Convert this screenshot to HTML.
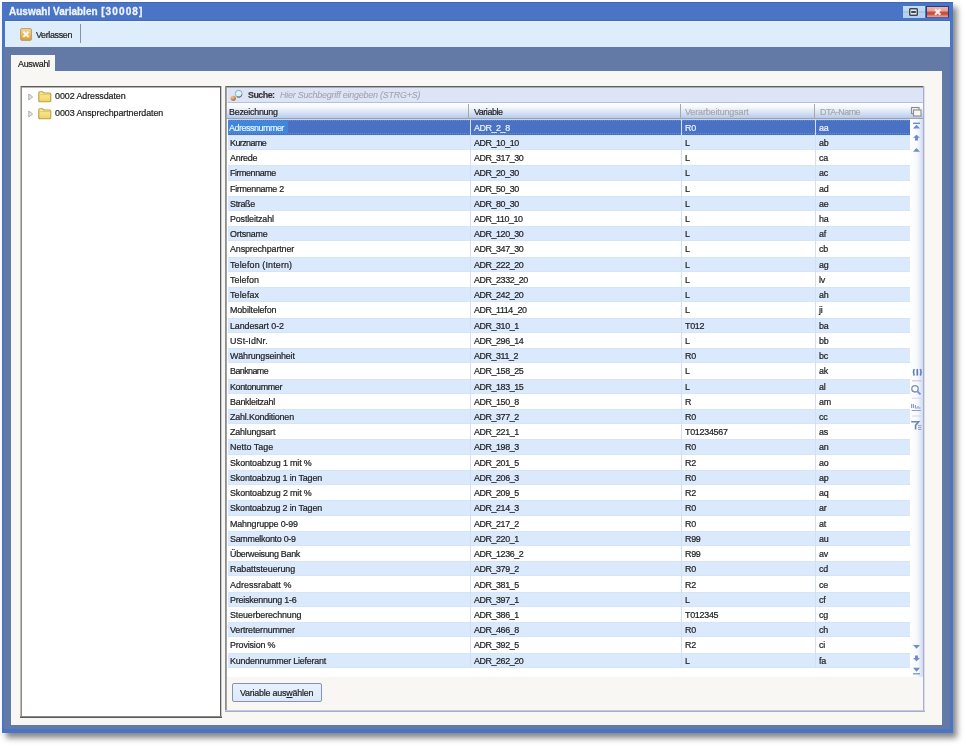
<!DOCTYPE html>
<html><head><meta charset="utf-8">
<style>
*{box-sizing:border-box;margin:0;padding:0}
html,body{width:967px;height:747px;overflow:hidden;background:#fff;font-family:"Liberation Sans",sans-serif}
#root{position:absolute;left:0;top:0;width:967px;height:747px;will-change:transform}
.abs{position:absolute}
#win{position:absolute;left:2px;top:2px;width:951px;height:731px;background:#4a74c6;box-shadow:4px 5px 6px rgba(0,0,0,.48)}
#title{position:absolute;left:9.2px;top:5.6px;transform-origin:0 0;transform:scaleX(0.965);letter-spacing:0px;font-weight:bold;font-size:10.4px;color:#eef3ff;white-space:nowrap;-webkit-text-stroke:0.3px #eef3ff;line-height:12px}
#toolbar{position:absolute;left:5px;top:21px;width:945px;height:26px;background:linear-gradient(#eaf4fe,#deedfc 2px)}
#slate{position:absolute;left:4px;top:47px;width:946px;height:682px;background:#6379a6}
#panel{position:absolute;left:11.3px;top:71.3px;width:931px;height:654px;background:#f8f7f3}
#tab{position:absolute;left:11px;top:55px;width:44px;height:17px;background:#f8f7f3}
.txt{position:absolute;transform-origin:0 0;transform:scaleX(0.93);white-space:nowrap;font-size:9.6px;color:#222;line-height:10px;-webkit-text-stroke:0.22px #222}
#tree{position:absolute;left:20.6px;top:86px;width:200.4px;height:631.4px;background:#fff;border:1.3px solid #4a4a4a;border-left-color:#8a8a8a;border-bottom-color:#505050}
.r{position:absolute;left:228.2px;width:681.8px;height:15.23px}
.r.alt{background:linear-gradient(#d3dff3,#dae9fc 1px,#dae9fc calc(100% - 1px),#d3dff3)}
.r.sel{background:#4a72c4}
.c{position:absolute;transform-origin:0 0;transform:scaleX(0.93);top:3.0px;font-size:9.6px;color:#222;white-space:nowrap;line-height:10px;-webkit-text-stroke:0.22px #222}
.sel .c{color:#eef4ff;-webkit-text-stroke:0.2px #eef4ff}
.c1{left:1.6px}.c2{left:245.5px;letter-spacing:-0.460px}.c3{left:457px}.c4{left:591px;letter-spacing:-0.35px}
.vl{position:absolute;width:1px;background:#d4e0f2}
.hl{position:absolute;width:1px;background:#a9a9a6}
.ht{position:absolute;transform-origin:0 0;transform:scaleX(0.93);white-space:nowrap;font-size:9.6px;color:#222;line-height:10px;-webkit-text-stroke:0.22px #222}
.ht.dis{color:#a6a6a6;-webkit-text-stroke:0.2px #a6a6a6}
</style></head><body><div id="root">
<div id="win"></div>
<div class="abs" style="left:2px;top:2px;width:951px;height:1px;background:#4266b4"></div>
<div class="abs" style="left:5px;top:20px;width:945px;height:1px;background:#426cb8"></div>
<div id="title">Auswahl Variablen <span style="letter-spacing:1.15px;margin-left:0.8px">[30008]</span></div>
<!-- title buttons -->
<div class="abs" style="left:903px;top:6px;width:22px;height:12px;background:linear-gradient(#c6e0fa,#b6d4f4 50%,#b0d0f2)"></div>
<div class="abs" style="left:903px;top:11px;width:22px;height:2px;background:#a9bec8;opacity:.6"></div>
<div class="abs" style="left:909px;top:8px;width:9px;height:8px;border:1px solid #3e4652;border-radius:1px;background:#e2e8ee;box-shadow:inset 0 0 0 0.5px #5a6270"></div>
<div class="abs" style="left:911px;top:11px;width:5px;height:2px;background:#3c4450;border-radius:1px"></div>
<div class="abs" style="left:926px;top:6px;width:23px;height:12px;border:1px solid #2c3a7c;border-bottom-color:#5a5a9a;background:linear-gradient(#ecb8b0,#e6a49a 35%,#cf503a 55%,#c84a34 70%,#e09080 90%,#e6a898)"></div>
<svg class="abs" style="left:926px;top:6px" width="23" height="12" viewBox="0 0 23 12"><path d="M9 3.2 L14.4 8.8 M14.4 3.2 L9 8.8" stroke="#f6eeee" stroke-width="2.1"/></svg>

<div id="toolbar"></div>
<!-- exit icon -->
<div class="abs" style="left:20px;top:28px;width:12px;height:12.5px;border-radius:2px;background:linear-gradient(#f0d49e,#e6bc70 45%,#d69c42);border:1px solid #c9a262"></div>
<svg class="abs" style="left:20px;top:28px" width="12" height="12" viewBox="0 0 12 12"><path d="M3.3 3.8 L8.7 9 M8.7 3.8 L3.3 9" stroke="#fff6e6" stroke-width="2"/></svg>
<div class="txt" style="left:35.8px;top:30.2px;letter-spacing:-0.371px">Verlassen</div>
<div class="abs" style="left:80px;top:24px;width:1px;height:19px;background:#8d92a0"></div>

<div id="slate"></div>
<div id="tab"></div>
<div class="txt" style="left:18px;top:58.6px;letter-spacing:-0.301px">Auswahl</div>
<div id="panel"></div>

<div class="abs" style="left:20px;top:86px;width:202px;height:632px;background:#fff"></div>
<div class="abs" style="left:20px;top:86px;width:202px;height:1px;background:#5c5c5c"></div>
<div class="abs" style="left:20px;top:87px;width:202px;height:1px;background:#b4b4b4"></div>
<div class="abs" style="left:20px;top:86px;width:1px;height:632px;background:#b8b8b8"></div>
<div class="abs" style="left:21px;top:87px;width:1px;height:631px;background:#8c8c8c"></div>
<div class="abs" style="left:220px;top:86px;width:1px;height:632px;background:#5c5c5c"></div>
<div class="abs" style="left:221px;top:86px;width:1px;height:632px;background:#c8c8c8"></div>
<div class="abs" style="left:20px;top:716px;width:202px;height:1px;background:#8a8a8a"></div>
<div class="abs" style="left:20px;top:717px;width:202px;height:1px;background:#5a5a5a"></div>
<svg class="abs" style="left:27px;top:92px" width="8" height="10" viewBox="0 0 8 10"><path d="M1.8 2 L5.6 5 L1.8 8 Z" fill="#e4e4e4" stroke="#b0b0b0" stroke-width="1"/></svg>
<svg class="abs" style="left:37.5px;top:90.6px" width="14" height="12" viewBox="0 0 14 12"><defs><linearGradient id="fg" x1="0" y1="0" x2="0" y2="1"><stop offset="0" stop-color="#fff0a0"/><stop offset="1" stop-color="#f0d060"/></linearGradient></defs><path d="M0.8 2 Q0.8 0.8 2 0.8 L4.6 0.8 L5.8 2 L11.5 2 Q12.8 2 12.8 3.2 L12.8 9.6 Q12.8 10.8 11.6 10.8 L2 10.8 Q0.8 10.8 0.8 9.6 Z" fill="url(#fg)" stroke="#b8a044" stroke-width="1.1"/><path d="M1.4 3.6 L12.2 3.6" stroke="#d8c060" stroke-width="0.8"/></svg>
<div class="txt" style="left:55.2px;top:91.3px;letter-spacing:-0.087px">0002 Adressdaten</div>
<svg class="abs" style="left:27px;top:109px" width="8" height="10" viewBox="0 0 8 10"><path d="M1.8 2 L5.6 5 L1.8 8 Z" fill="#e4e4e4" stroke="#b0b0b0" stroke-width="1"/></svg>
<svg class="abs" style="left:37.5px;top:107.6px" width="14" height="12" viewBox="0 0 14 12"><path d="M0.8 2 Q0.8 0.8 2 0.8 L4.6 0.8 L5.8 2 L11.5 2 Q12.8 2 12.8 3.2 L12.8 9.6 Q12.8 10.8 11.6 10.8 L2 10.8 Q0.8 10.8 0.8 9.6 Z" fill="url(#fg)" stroke="#b8a044" stroke-width="1.1"/><path d="M1.4 3.6 L12.2 3.6" stroke="#d8c060" stroke-width="0.8"/></svg>
<div class="txt" style="left:55.2px;top:108.3px;letter-spacing:-0.082px">0003 Ansprechpartnerdaten</div>

<!-- grid box -->
<div class="abs" style="left:225px;top:86px;width:700px;height:626px;background:#f8f7f3"></div>
<div class="abs" style="left:227px;top:88px;width:696px;height:589px;background:#fff"></div>
<div class="abs" style="left:225px;top:86px;width:700px;height:1px;background:#5e6266"></div>
<div class="abs" style="left:225px;top:87px;width:699px;height:1px;background:#a8adb8"></div>
<div class="abs" style="left:225px;top:86px;width:1px;height:626px;background:#8e8e8e"></div>
<div class="abs" style="left:226px;top:87px;width:1px;height:624px;background:#a2a2a2"></div>
<div class="abs" style="left:923px;top:86px;width:1px;height:626px;background:#a8aed0"></div>
<div class="abs" style="left:924px;top:86px;width:1px;height:626px;background:#dcdde8"></div>
<div class="abs" style="left:225px;top:710px;width:700px;height:1px;background:#c4c8de"></div>
<div class="abs" style="left:225px;top:711px;width:700px;height:1px;background:#a8acca"></div>
<!-- search bar -->
<div class="abs" style="left:227px;top:88px;width:696px;height:15px;background:#dde4f5;border-bottom:1px solid #b4c0dc;border-left:1px solid #eaeef8"></div>
<svg class="abs" style="left:228px;top:88px" width="16" height="14" viewBox="0 0 16 14"><defs><radialGradient id="hg" cx="0.35" cy="0.3" r="0.8"><stop offset="0" stop-color="#f4c890"/><stop offset="1" stop-color="#a8683a"/></radialGradient></defs><circle cx="10.7" cy="5.7" r="3.4" fill="#d6f6f8" stroke="#9aa8b0" stroke-width="1"/><path d="M8.8 8.6 A3.4 3.4 0 0 0 13.9 6.6" fill="none" stroke="#6a7480" stroke-width="1.1"/><circle cx="5.3" cy="10.3" r="2.6" fill="url(#hg)"/></svg>
<div class="txt" style="left:247.7px;top:90.1px;font-weight:bold;color:#333;letter-spacing:-0.587px;-webkit-text-stroke:0.15px #333">Suche:</div>
<div class="txt" style="left:280px;top:90.1px;font-style:italic;color:#a4a4ac;letter-spacing:-0.234px;-webkit-text-stroke:0.1px #a4a4ac">Hier Suchbegriff eingeben (STRG+S)</div>
<!-- header -->
<div class="abs" style="left:227px;top:103px;width:696px;height:16px;background:linear-gradient(#fbfdff,#f6f8fd 25%,#dce5f5 60%,#b8cbec);border-bottom:1px solid #98a2b2"></div>
<div class="hl" style="left:468.4px;top:104px;height:14.5px"></div>
<div class="hl" style="left:679.8px;top:104px;height:14.5px"></div>
<div class="hl" style="left:814.3px;top:104px;height:14.5px"></div>
<div class="ht" style="left:229.4px;top:106.8px;letter-spacing:-0.285px">Bezeichnung</div>
<div class="ht" style="left:473.9px;top:106.8px;letter-spacing:-0.484px">Variable</div>
<div class="ht dis" style="left:685px;top:106.8px;letter-spacing:-0.124px">Verarbeitungsart</div>
<div class="ht dis" style="left:819.6px;top:106.8px;letter-spacing:-0.524px">DTA-Name</div>
<!-- column chooser -->
<svg class="abs" style="left:910px;top:106px" width="12" height="11" viewBox="0 0 12 11"><rect x="1.5" y="1.5" width="7.5" height="6" fill="#eeeeee" stroke="#8c8c8c" stroke-width="1.1"/><rect x="3.5" y="4" width="7.5" height="6" fill="#f6f6f6" stroke="#8c8c8c" stroke-width="1.1"/></svg>

<!-- rows -->
<div class="r sel" style="top:119.60px"><span class="c c1" style="letter-spacing:-0.503px"></span><span class="c c2">ADR_2_8</span><span class="c c3" style="letter-spacing:-0.298px">R0</span><span class="c c4">aa</span></div>
<div class="r alt" style="top:134.83px"><span class="c c1" style="letter-spacing:-0.602px">Kurzname</span><span class="c c2">ADR_10_10</span><span class="c c3" style="letter-spacing:-0.298px">L</span><span class="c c4">ab</span></div>
<div class="r" style="top:150.06px"><span class="c c1" style="letter-spacing:-0.286px">Anrede</span><span class="c c2">ADR_317_30</span><span class="c c3" style="letter-spacing:-0.298px">L</span><span class="c c4">ca</span></div>
<div class="r alt" style="top:165.29px"><span class="c c1" style="letter-spacing:-0.468px">Firmenname</span><span class="c c2">ADR_20_30</span><span class="c c3" style="letter-spacing:-0.298px">L</span><span class="c c4">ac</span></div>
<div class="r" style="top:180.52px"><span class="c c1" style="letter-spacing:-0.328px">Firmenname 2</span><span class="c c2">ADR_50_30</span><span class="c c3" style="letter-spacing:-0.298px">L</span><span class="c c4">ad</span></div>
<div class="r alt" style="top:195.75px"><span class="c c1" style="letter-spacing:-0.338px">Straße</span><span class="c c2">ADR_80_30</span><span class="c c3" style="letter-spacing:-0.298px">L</span><span class="c c4">ae</span></div>
<div class="r" style="top:210.98px"><span class="c c1" style="letter-spacing:-0.163px">Postleitzahl</span><span class="c c2">ADR_110_10</span><span class="c c3" style="letter-spacing:-0.298px">L</span><span class="c c4">ha</span></div>
<div class="r alt" style="top:226.21px"><span class="c c1" style="letter-spacing:-0.240px">Ortsname</span><span class="c c2">ADR_120_30</span><span class="c c3" style="letter-spacing:-0.298px">L</span><span class="c c4">af</span></div>
<div class="r" style="top:241.44px"><span class="c c1" style="letter-spacing:-0.133px">Ansprechpartner</span><span class="c c2">ADR_347_30</span><span class="c c3" style="letter-spacing:-0.298px">L</span><span class="c c4">cb</span></div>
<div class="r alt" style="top:256.67px"><span class="c c1" style="letter-spacing:0.149px">Telefon (Intern)</span><span class="c c2">ADR_222_20</span><span class="c c3" style="letter-spacing:-0.298px">L</span><span class="c c4">ag</span></div>
<div class="r" style="top:271.90px"><span class="c c1" style="letter-spacing:0.030px">Telefon</span><span class="c c2">ADR_2332_20</span><span class="c c3" style="letter-spacing:-0.298px">L</span><span class="c c4">lv</span></div>
<div class="r alt" style="top:287.13px"><span class="c c1" style="letter-spacing:0.143px">Telefax</span><span class="c c2">ADR_242_20</span><span class="c c3" style="letter-spacing:-0.298px">L</span><span class="c c4">ah</span></div>
<div class="r" style="top:302.36px"><span class="c c1" style="letter-spacing:-0.162px">Mobiltelefon</span><span class="c c2">ADR_1114_20</span><span class="c c3" style="letter-spacing:-0.298px">L</span><span class="c c4">ji</span></div>
<div class="r alt" style="top:317.59px"><span class="c c1" style="letter-spacing:-0.096px">Landesart 0-2</span><span class="c c2">ADR_310_1</span><span class="c c3" style="letter-spacing:-0.298px">T012</span><span class="c c4">ba</span></div>
<div class="r" style="top:332.82px"><span class="c c1" style="letter-spacing:0.125px">USt-IdNr.</span><span class="c c2">ADR_296_14</span><span class="c c3" style="letter-spacing:-0.298px">L</span><span class="c c4">bb</span></div>
<div class="r alt" style="top:348.05px"><span class="c c1" style="letter-spacing:-0.158px">Währungseinheit</span><span class="c c2">ADR_311_2</span><span class="c c3" style="letter-spacing:-0.298px">R0</span><span class="c c4">bc</span></div>
<div class="r" style="top:363.28px"><span class="c c1" style="letter-spacing:-0.611px">Bankname</span><span class="c c2">ADR_158_25</span><span class="c c3" style="letter-spacing:-0.298px">L</span><span class="c c4">ak</span></div>
<div class="r alt" style="top:378.51px"><span class="c c1" style="letter-spacing:-0.387px">Kontonummer</span><span class="c c2">ADR_183_15</span><span class="c c3" style="letter-spacing:-0.298px">L</span><span class="c c4">al</span></div>
<div class="r" style="top:393.74px"><span class="c c1" style="letter-spacing:-0.286px">Bankleitzahl</span><span class="c c2">ADR_150_8</span><span class="c c3" style="letter-spacing:-0.298px">R</span><span class="c c4">am</span></div>
<div class="r alt" style="top:408.97px"><span class="c c1" style="letter-spacing:-0.205px">Zahl.Konditionen</span><span class="c c2">ADR_377_2</span><span class="c c3" style="letter-spacing:-0.298px">R0</span><span class="c c4">cc</span></div>
<div class="r" style="top:424.20px"><span class="c c1" style="letter-spacing:-0.186px">Zahlungsart</span><span class="c c2">ADR_221_1</span><span class="c c3" style="letter-spacing:-0.298px">T01234567</span><span class="c c4">as</span></div>
<div class="r alt" style="top:439.43px"><span class="c c1" style="letter-spacing:0.014px">Netto Tage</span><span class="c c2">ADR_198_3</span><span class="c c3" style="letter-spacing:-0.298px">R0</span><span class="c c4">an</span></div>
<div class="r" style="top:454.66px"><span class="c c1" style="letter-spacing:-0.151px">Skontoabzug 1 mit %</span><span class="c c2">ADR_201_5</span><span class="c c3" style="letter-spacing:-0.298px">R2</span><span class="c c4">ao</span></div>
<div class="r alt" style="top:469.89px"><span class="c c1" style="letter-spacing:-0.174px">Skontoabzug 1 in Tagen</span><span class="c c2">ADR_206_3</span><span class="c c3" style="letter-spacing:-0.298px">R0</span><span class="c c4">ap</span></div>
<div class="r" style="top:485.12px"><span class="c c1" style="letter-spacing:-0.151px">Skontoabzug 2 mit %</span><span class="c c2">ADR_209_5</span><span class="c c3" style="letter-spacing:-0.298px">R2</span><span class="c c4">aq</span></div>
<div class="r alt" style="top:500.35px"><span class="c c1" style="letter-spacing:-0.174px">Skontoabzug 2 in Tagen</span><span class="c c2">ADR_214_3</span><span class="c c3" style="letter-spacing:-0.298px">R0</span><span class="c c4">ar</span></div>
<div class="r" style="top:515.58px"><span class="c c1" style="letter-spacing:-0.190px">Mahngruppe 0-99</span><span class="c c2">ADR_217_2</span><span class="c c3" style="letter-spacing:-0.298px">R0</span><span class="c c4">at</span></div>
<div class="r alt" style="top:530.81px"><span class="c c1" style="letter-spacing:-0.303px">Sammelkonto 0-9</span><span class="c c2">ADR_220_1</span><span class="c c3" style="letter-spacing:-0.298px">R99</span><span class="c c4">au</span></div>
<div class="r" style="top:546.04px"><span class="c c1" style="letter-spacing:-0.332px">Überweisung Bank</span><span class="c c2">ADR_1236_2</span><span class="c c3" style="letter-spacing:-0.298px">R99</span><span class="c c4">av</span></div>
<div class="r alt" style="top:561.27px"><span class="c c1" style="letter-spacing:-0.056px">Rabattsteuerung</span><span class="c c2">ADR_379_2</span><span class="c c3" style="letter-spacing:-0.298px">R0</span><span class="c c4">cd</span></div>
<div class="r" style="top:576.50px"><span class="c c1" style="letter-spacing:0.026px">Adressrabatt %</span><span class="c c2">ADR_381_5</span><span class="c c3" style="letter-spacing:-0.298px">R2</span><span class="c c4">ce</span></div>
<div class="r alt" style="top:591.73px"><span class="c c1" style="letter-spacing:-0.226px">Preiskennung 1-6</span><span class="c c2">ADR_397_1</span><span class="c c3" style="letter-spacing:-0.298px">L</span><span class="c c4">cf</span></div>
<div class="r" style="top:606.96px"><span class="c c1" style="letter-spacing:-0.141px">Steuerberechnung</span><span class="c c2">ADR_386_1</span><span class="c c3" style="letter-spacing:-0.298px">T012345</span><span class="c c4">cg</span></div>
<div class="r alt" style="top:622.19px"><span class="c c1" style="letter-spacing:-0.158px">Vertreternummer</span><span class="c c2">ADR_466_8</span><span class="c c3" style="letter-spacing:-0.298px">R0</span><span class="c c4">ch</span></div>
<div class="r" style="top:637.42px"><span class="c c1" style="letter-spacing:-0.175px">Provision %</span><span class="c c2">ADR_392_5</span><span class="c c3" style="letter-spacing:-0.298px">R2</span><span class="c c4">ci</span></div>
<div class="r alt" style="top:652.65px"><span class="c c1" style="letter-spacing:-0.227px">Kundennummer Lieferant</span><span class="c c2">ADR_262_20</span><span class="c c3" style="letter-spacing:-0.298px">L</span><span class="c c4">fa</span></div>
<!-- selection highlight + focus -->
<div class="abs" style="left:228px;top:119px;width:682px;height:1px;background:#c4d4f0"></div>
<div class="abs" style="left:228.4px;top:120.8px;width:59.6px;height:12.2px;background:#3f86de"></div>
<div class="abs" style="left:229.4px;top:122.6px;transform-origin:0 0;transform:scaleX(0.93);font-size:9.6px;letter-spacing:-0.503px;line-height:10px;white-space:nowrap;color:#e8f4ff;-webkit-text-stroke:0.2px #e8f4ff">Adressnummer</div>
<div class="abs" style="left:228.2px;top:119.8px;width:681.8px;height:1px;background-image:linear-gradient(90deg,#e8f0ff 50%,transparent 50%);background-size:2px 1px;opacity:.2"></div>
<div class="abs" style="left:228.2px;top:133.2px;width:681.8px;height:1px;background-image:linear-gradient(90deg,#e8f0ff 50%,transparent 50%);background-size:2px 1px;opacity:.2"></div>
<!-- column lines in rows -->
<div class="vl" style="left:469.6px;top:119.6px;height:548.3px"></div>
<div class="vl" style="left:681px;top:119.6px;height:548.3px"></div>
<div class="vl" style="left:815.4px;top:119.6px;height:548.3px"></div>
<!-- right strip -->
<div class="abs" style="left:910px;top:119px;width:13px;height:558px;background:linear-gradient(90deg,#ffffff,#f6f9fe 55%,#d0dcf2)"></div>
<svg class="abs" style="left:910px;top:119px" width="13" height="560" viewBox="0 0 13 560">
<g fill="#6e8ccc">
<rect x="3" y="3.6" width="7" height="1.4"/><path d="M3 9.6 L6.5 5.8 L10 9.6 Z"/>
<path d="M6.5 15.8 L10 18.8 L8 18.8 L8 21.6 L5 21.6 L5 18.8 L3 18.8 Z"/>
<path d="M3 32.8 L6.5 29 L10 32.8 Z"/>
<path d="M3 526 L6.5 529.8 L10 526 Z"/>
<path d="M5 536.5 L8 536.5 L8 539 L10 539 L6.5 542.2 L3 539 L5 539 Z"/>
<path d="M3 548.7 L6.5 552.7 L10 548.7 Z"/><rect x="3" y="554.2" width="7" height="1.2"/>
</g>
</svg>
<!-- side tool icons -->
<svg class="abs" style="left:908px;top:362px" width="16" height="72" viewBox="0 0 16 72">
<g fill="none">
<path d="M6.2 7 Q4.6 10.3 6.2 13.6 M12.4 7 Q14 10.3 12.4 13.6" stroke="#5f7cbc" stroke-width="1.6"/>
<path d="M9.3 7 L9.3 13.6" stroke="#5f7cbc" stroke-width="1.7"/>
<path d="M4 18.8 L13.5 18.8" stroke="#c4bde8" stroke-width="1"/>
<circle cx="7" cy="26.8" r="3.2" stroke="#7e8cb8" stroke-width="1.3"/>
<path d="M9.3 29.2 L12.5 32.4" stroke="#7898d0" stroke-width="2"/>
<path d="M4 36.2 L13.5 36.2" stroke="#d8d4ee" stroke-width="1"/>
<path d="M3.6 42 L3.6 46 M5.4 42 L5.4 46 M7.4 43 L7.4 46 L9 46 M10 44 L10 46 L12.6 46 M3.6 48.5 L12.8 48.5" stroke="#8c9cc8" stroke-width="1.1"/>
<path d="M4 54 L13.5 54" stroke="#d8d4ee" stroke-width="1"/>
<path d="M3.2 59.8 L10.6 59.8 L7.6 63.4 L7.6 67.4" stroke="#6c84bc" stroke-width="1.6"/>
<path d="M10 63.6 L13.4 63.6 M10 65.6 L13.4 65.6 M10 67.4 L13.4 67.4" stroke="#8aa0cc" stroke-width="1"/>
</g>
</svg>

<!-- button -->
<div class="abs" style="left:232px;top:683px;width:89.5px;height:19px;border:1px solid #8890b8;border-radius:2px;background:linear-gradient(#e8f2fe,#dce9fb)"></div>
<div class="txt" style="left:239.8px;top:687.7px;color:#222;letter-spacing:-0.240px">Variable aus<span style="text-decoration:underline">w</span>ählen</div>
</div></body></html>
